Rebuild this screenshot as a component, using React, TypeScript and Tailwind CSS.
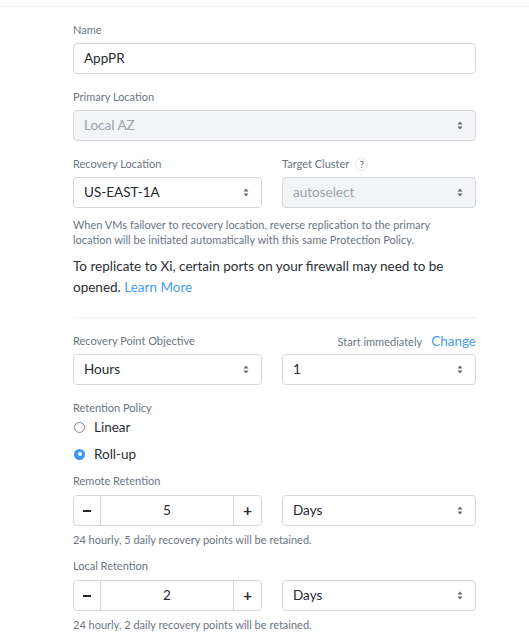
import React from "react";

const font = { fontFamily: "Lato, 'Open Sans', sans-serif" };

function Arrows() {
  return (
    <svg width="6" height="9" viewBox="0 0 6 9" className="shrink-0">
      <path d="M3 0.5 L5.5 3.5 H0.5 Z" fill="#5f6873" />
      <path d="M3 8.5 L5.5 5.5 H0.5 Z" fill="#5f6873" />
    </svg>
  );
}

function Label({ children, className = "" }: { children: React.ReactNode; className?: string }) {
  return <div className={`text-[11px] leading-[14px] text-[#6b7581] ${className}`}>{children}</div>;
}

function Select({ value, disabled = false, className = "" }: { value: string; disabled?: boolean; className?: string }) {
  return (
    <div
      className={`h-[31px] flex items-center justify-between pl-[10px] pr-[12px] rounded-[4px] border border-[#d3d7dc] text-[13.5px] ${
        disabled ? "bg-[#f2f4f6] text-[#9aa2ab]" : "bg-white text-[#23282d]"
      } ${className}`}
    >
      <span>{value}</span>
      <Arrows />
    </div>
  );
}

function Stepper({ value }: { value: string }) {
  return (
    <div className="h-[31px] w-[189px] flex rounded-[4px] border border-[#d3d7dc] bg-white text-[#23282d]">
      <div className="w-[27px] flex items-center justify-center border-r border-[#d3d7dc]">
        <div className="w-[8px] h-[2px] bg-[#23282d]" />
      </div>
      <div className="flex-1 flex items-center justify-center text-[13.5px]">{value}</div>
      <div className="w-[28px] flex items-center justify-center border-l border-[#d3d7dc] text-[15px] font-bold">
        +
      </div>
    </div>
  );
}

function Radio({ checked, label }: { checked: boolean; label: string }) {
  return (
    <div className="flex items-center h-[20px] gap-[9px]">
      {checked ? (
        <div className="w-[11px] h-[11px] rounded-full bg-[#3d96f2] flex items-center justify-center ml-[1px]">
          <div className="w-[4px] h-[4px] rounded-full bg-white" />
        </div>
      ) : (
        <div className="w-[11px] h-[11px] rounded-full border border-[#7f8892] bg-white ml-[1px]" />
      )}
      <span className="text-[13.5px] text-[#2a2f35]">{label}</span>
    </div>
  );
}

export default function App() {
  return (
    <div className="w-[529px] h-[635px] bg-white overflow-hidden" style={font}>
      <div className="h-[6px]" />
      <div className="border-t border-[#f0f1f3]" />
      <div className="ml-[73px] w-[403px]">
        <Label className="mt-[16px]">Name</Label>
        <div className="mt-[6px] h-[31px] flex items-center pl-[10px] rounded-[4px] border border-[#d3d7dc] text-[13.5px] text-[#23282d]">
          AppPR
        </div>

        <Label className="mt-[16px]">Primary Location</Label>
        <Select value="Local AZ" disabled className="mt-[6px]" />

        <div className="mt-[16px] flex gap-[20px] h-[14px] items-center">
          <div className="w-[189px]">
            <Label>Recovery Location</Label>
          </div>
          <div className="flex-1 flex items-center gap-[6px]">
            <Label>Target Cluster</Label>
            <div className="w-[13px] h-[13px] rounded-full border border-[#e6e8eb] flex items-center justify-center text-[10px] leading-none text-[#5f6873]">
              ?
            </div>
          </div>
        </div>
        <div className="mt-[6px] flex gap-[20px]">
          <Select value="US-EAST-1A" className="w-[189px]" />
          <Select value="autoselect" disabled className="flex-1" />
        </div>

        <p className="mt-[9px] text-[11px] leading-[15px] text-[#6b7581]">
          When VMs failover to recovery location, reverse replication to the primary
          <br />
          location will be initiated automatically with this same Protection Policy.
        </p>
        <p className="mt-[9px] text-[13.5px] leading-[21px] text-[#2a2f35]">
          To replicate to Xi, certain ports on your firewall may need to be
          <br />
          opened. <span className="text-[#4a9cf0]">Learn More</span>
        </p>

        <div className="mt-[19px] border-t border-[#f0f1f3]" />

        <div className="mt-[16px] flex items-center justify-between h-[14px]">
          <Label>Recovery Point Objective</Label>
          <div className="flex items-center gap-[9px]">
            <span className="text-[11px] leading-[14px] text-[#6b7581] mt-[2px]">Start immediately</span>
            <span className="text-[13.5px] leading-[14px] text-[#4a9cf0]">Change</span>
          </div>
        </div>
        <div className="mt-[6px] flex gap-[20px]">
          <Select value="Hours" className="w-[189px]" />
          <Select value="1" className="flex-1" />
        </div>

        <Label className="mt-[16px]">Retention Policy</Label>
        <div className="mt-[2px] flex flex-col gap-[7px]">
          <Radio checked={false} label="Linear" />
          <Radio checked label="Roll-up" />
        </div>

        <Label className="mt-[10px]">Remote Retention</Label>
        <div className="mt-[7px] flex gap-[20px]">
          <Stepper value="5" />
          <Select value="Days" className="flex-1" />
        </div>
        <Label className="mt-[7px]">24 hourly, 5 daily recovery points will be retained.</Label>

        <Label className="mt-[12px]">Local Retention</Label>
        <div className="mt-[7px] flex gap-[20px]">
          <Stepper value="2" />
          <Select value="Days" className="flex-1" />
        </div>
        <Label className="mt-[7px]">24 hourly, 2 daily recovery points will be retained.</Label>
      </div>
    </div>
  );
}
